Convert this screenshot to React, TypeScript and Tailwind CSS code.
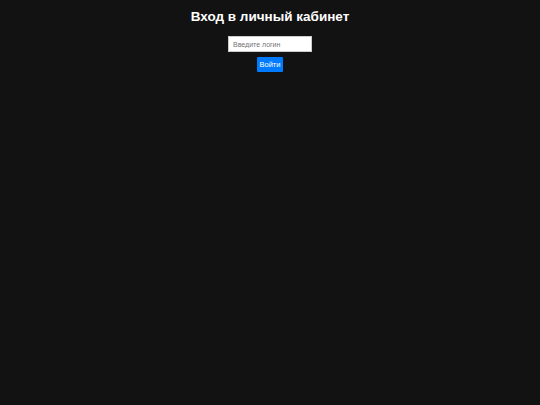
export default function App() {
  return (
    <div
      className="min-h-screen bg-[#121212] text-white"
      style={{ fontFamily: '"Liberation Sans", Arial, sans-serif' }}
    >
      <div className="flex flex-col items-center pt-[9px]">
        {/* Heading */}
        <h1 className="text-[13.5px] font-bold leading-[16px]">Вход в личный кабинет</h1>

        {/* Form */}
        <form className="mt-[11px] flex flex-col items-center">
          <input
            type="text"
            placeholder="Введите логин"
            className="h-[16px] w-[84px] border border-[#cccccc] bg-white px-[4px] text-[7px] text-black placeholder:text-[#757575] outline-none"
          />
          <button
            type="button"
            className="mt-[5px] h-[15px] w-[26px] rounded-[1px] bg-[#007bff] text-[7.5px] leading-none text-white"
          >
            Войти
          </button>
        </form>
      </div>
    </div>
  );
}
